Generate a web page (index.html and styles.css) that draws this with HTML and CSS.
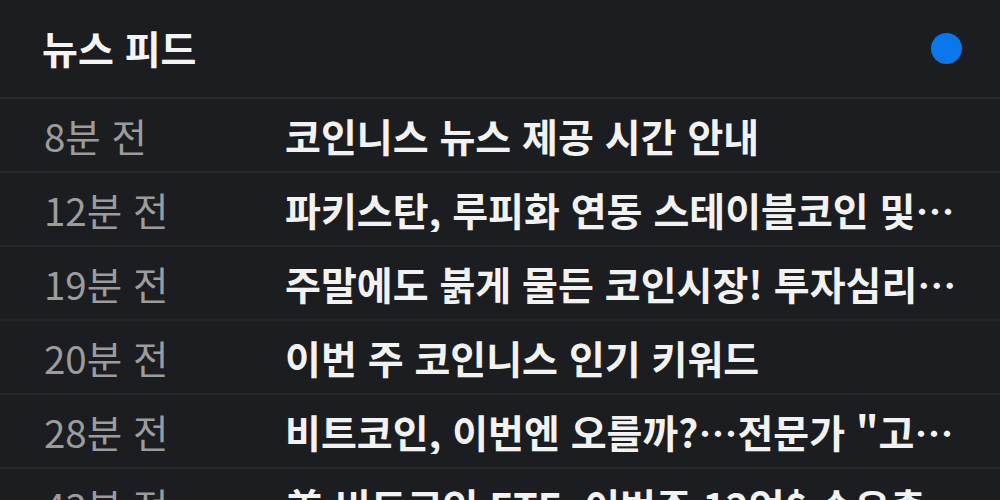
FILE: index.html
```html
<!DOCTYPE html>
<html lang="ko">
<head>
  <meta charset="UTF-8">
  <title>뉴스 피드</title>
  <link rel="stylesheet" href="styles.css">
</head>
<body>
  <div class="feed">
    <div class="feed-head">
      <h2 class="feed-title">뉴스 피드</h2>
      <span class="live-dot"></span>
    </div>

    <ul class="feed-list">
      <li class="item">
        <span class="time">8분 전</span>
        <span class="headline">코인니스 뉴스 제공 시간 안내</span>
      </li>
      <li class="item">
        <span class="time">12분 전</span>
        <span class="headline">파키스탄, 루피화 연동 스테이블코인 및 디지털 자산 규제 추진</span>
      </li>
      <li class="item">
        <span class="time">19분 전</span>
        <span class="headline">주말에도 붉게 물든 코인시장! 투자심리 위축 지속</span>
      </li>
      <li class="item">
        <span class="time">20분 전</span>
        <span class="headline">이번 주 코인니스 인기 키워드</span>
      </li>
      <li class="item">
        <span class="time">28분 전</span>
        <span class="headline">비트코인, 이번엔 오를까?…전문가 "고점 돌파 가능성"</span>
      </li>
      <li class="item">
        <span class="time">43분 전</span>
        <span class="headline">美 비트코인 ETF, 이번주 12억$ 순유출</span>
      </li>
    </ul>
  </div>
</body>
</html>
```

FILE: styles.css
```css
html, body {
  margin: 0;
  padding: 0;
  background: #1b1d20;
  overflow: hidden;
  font-family: "Noto Sans CJK KR", "Noto Sans", sans-serif;
}

.feed {
  width: 1000px;
  color: #f2f2f2;
}

.feed-head {
  height: 97px;
  display: flex;
  align-items: center;
  justify-content: space-between;
  padding: 0 38px 0 42px;
  border-bottom: 2px solid #2a2b2e;
}

.feed-title {
  margin: 0;
  font-size: 39px;
  font-weight: 700;
  line-height: 1.2;
  color: #f4f4f4;
  padding-bottom: 2px;
}

.live-dot {
  width: 31px;
  height: 31px;
  border-radius: 50%;
  background: #0a78ec;
}

.feed-list {
  list-style: none;
  margin: 0;
  padding: 0;
}

.item {
  height: 72px;
  display: flex;
  align-items: center;
  padding: 0 42px 0 44px;
  border-bottom: 2px solid #242629;
}

.time {
  flex: 0 0 241px;
  font-size: 38.5px;
  line-height: 1.2;
  color: #9c9c9c;
}

.headline {
  flex: 1;
  min-width: 0;
  font-size: 39px;
  font-weight: 700;
  line-height: 1.2;
  color: #f2f2f2;
  white-space: nowrap;
  overflow: hidden;
  text-overflow: ellipsis;
}
```
